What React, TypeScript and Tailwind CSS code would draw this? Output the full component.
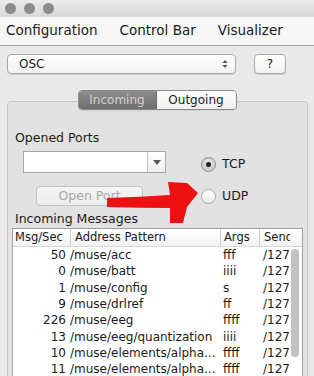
import React from "react";

const rows = [
  ["50", "/muse/acc", "fff"],
  ["0", "/muse/batt", "iiii"],
  ["1", "/muse/config", "s"],
  ["9", "/muse/drlref", "ff"],
  ["226", "/muse/eeg", "ffff"],
  ["13", "/muse/eeg/quantization", "iiii"],
  ["10", "/muse/elements/alpha...", "ffff"],
  ["11", "/muse/elements/alpha...", "ffff"],
];

export default function App() {
  return (
    <div
      className="relative w-[314px] h-[376px] overflow-hidden bg-[#e9e9e9] text-[#1a1a1a]"
      style={{ fontFamily: '"DejaVu Sans", "Liberation Sans", sans-serif' }}
    >
      {/* title bar */}
      <div className="h-[17px] bg-gradient-to-b from-[#ececec] to-[#d6d6d6] flex items-center gap-[8px] pl-[5px]">
        <div className="w-[11px] h-[11px] rounded-full bg-[#8c8c8c]" />
        <div className="w-[11px] h-[11px] rounded-full bg-[#8c8c8c]" />
        <div className="w-[11px] h-[11px] rounded-full bg-[#8c8c8c]" />
      </div>
      {/* menu bar */}
      <div className="h-[29px] bg-[#f7f7f7] border-b border-[#a5a5a5] flex items-center text-[13.5px] pb-[1px]">
        <span className="ml-[6px]">Configuration</span>
        <span className="ml-[22px]">Control Bar</span>
        <span className="ml-[22px]">Visualizer</span>
      </div>
      {/* combo row */}
      <div className="flex items-center mt-[8px] h-[20px]">
        <div className="ml-[7px] w-[229px] h-[20px] rounded-[4px] border border-[#a9a9a9] bg-gradient-to-b from-white to-[#f1f1f1] flex items-center justify-between text-[12px] shadow-[0_1px_0_#d0d0d0]">
          <span className="ml-[11px]">OSC</span>
          <svg width="6" height="10" viewBox="0 0 6 10" className="mr-[7px]">
            <path d="M0.5 4 L3 1 L5.5 4 Z" fill="#555" />
            <path d="M0.5 6 L3 9 L5.5 6 Z" fill="#555" />
          </svg>
        </div>
        <div className="ml-[18px] w-[32px] h-[20px] rounded-[4px] border border-[#a9a9a9] bg-gradient-to-b from-white to-[#f1f1f1] flex items-center justify-center text-[12px] shadow-[0_1px_0_#d0d0d0]">
          ?
        </div>
      </div>
      {/* tabs */}
      <div className="relative mt-[16px] h-[20px] flex justify-center z-10">
        <div className="flex h-[20px] rounded-[4px] overflow-hidden border border-[#8a8a8a] text-[12px] shadow-[0_1px_0_#cfcfcf]">
          <div className="w-[78px] bg-gradient-to-b from-[#8e8e8e] to-[#6e6e6e] text-[#d2d2d2] flex items-center justify-center border-r border-[#6a6a6a]">
            Incoming
          </div>
          <div className="w-[79px] bg-gradient-to-b from-white to-[#efefef] flex items-center justify-center">
            Outgoing
          </div>
        </div>
      </div>
      {/* panel */}
      <div className="absolute left-[7px] right-[6px] top-[101px] bottom-[-4px] rounded-[4px] border border-[#c6c6c6] bg-[#e2e2e2]">
        <div className="pt-[28px] pl-[7px] text-[12.5px] leading-[15px]">Opened Ports</div>
        <div className="flex mt-[6px]">
          <div className="flex flex-col">
            <div className="ml-[15px] flex h-[22px] w-[143px] border border-[#a8a8a8] bg-white">
              <div className="flex-1" />
              <div className="w-[18px] border-l border-[#c4c4c4] bg-gradient-to-b from-white to-[#eeeeee] flex items-center justify-center">
                <svg width="8" height="5" viewBox="0 0 8 5">
                  <path d="M0 0 L8 0 L4 5 Z" fill="#555" />
                </svg>
              </div>
            </div>
            <div className="ml-[28px] mt-[13px] w-[107px] h-[20px] rounded-[4px] border border-[#c3c3c3] bg-gradient-to-b from-[#f6f6f6] to-[#ebebeb] flex items-center justify-center text-[12.5px] text-[#a8a8a8]">
              Open Port
            </div>
          </div>
          <div className="ml-[35px] flex flex-col pt-[4px] gap-[13px] text-[12.5px]">
            <div className="flex items-center gap-[6px]">
              <div className="w-[15px] h-[15px] rounded-full border border-[#8e8e8e] bg-gradient-to-b from-[#e8e8e8] to-[#c8c8c8] flex items-center justify-center shadow-[inset_0_1px_1px_rgba(0,0,0,0.15)]">
                <div className="w-[5px] h-[5px] rounded-full bg-[#222]" />
              </div>
              <span>TCP</span>
            </div>
            <div className="flex items-center gap-[6px]">
              <div className="w-[15px] h-[15px] rounded-full border border-[#a8a8a8] bg-gradient-to-b from-white to-[#ececec]" />
              <span>UDP</span>
            </div>
          </div>
        </div>
        <div className="mt-[5px] pl-[7px] text-[12.5px] leading-[15px]">Incoming Messages</div>
        <div className="ml-[4px] mr-[4px] mt-[2px] border border-[#9f9f9f] bg-white h-[160px] overflow-hidden relative">
          <div className="flex h-[18px] items-center border-b border-[#d8d8d8] bg-gradient-to-b from-white to-[#f2f2f2] text-[11.5px]">
            <div className="w-[58px] pl-[2px] border-r border-[#cfcfcf]">Msg/Sec</div>
            <div className="w-[150px] pl-[4px] border-r border-[#cfcfcf]">Address Pattern</div>
            <div className="w-[39px] pl-[3px] border-r border-[#cfcfcf]">Args</div>
            <div className="w-[30px] pl-[4px] overflow-hidden whitespace-nowrap">Send</div>
          </div>
          {rows.map((r, i) => (
            <div key={i} className="flex h-[16.3px] items-center text-[12px] whitespace-nowrap">
              <div className="w-[53px] text-right">{r[0]}</div>
              <div className="w-[155px] pl-[4px]">{r[1]}</div>
              <div className="w-[39px] pl-[2px]">{r[2]}</div>
              <div className="pl-[3px] w-[29px] overflow-hidden">/127</div>
            </div>
          ))}
          <div className="absolute right-[3px] top-[20px] w-[8px] h-[108px] rounded-full bg-[#c2c2c2]" />
        </div>
      </div>
      {/* red arrow annotation */}
      <svg className="absolute left-0 top-0" width="314" height="376" viewBox="0 0 314 376">
        <path
          d="M107 198 Q140 197 170 195 L168 182 L187 183 L198 193 L187 207 L183 223 L170 223 L170 208 Q140 208 107 207 Z"
          fill="#ee1111"
        />
      </svg>
    </div>
  );
}
